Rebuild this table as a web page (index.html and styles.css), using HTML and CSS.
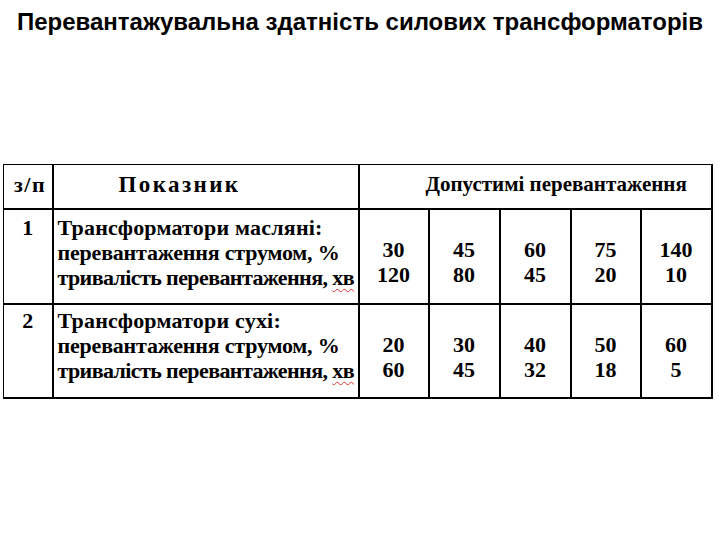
FILE: index.html
```html
<!DOCTYPE html>
<html lang="uk">
<head>
<meta charset="utf-8">
<title>Перевантажувальна здатність силових трансформаторів</title>
<link rel="stylesheet" href="styles.css">
</head>
<body>
<h1 class="title">Перевантажувальна здатність силових трансформаторів</h1>
<table class="grid">
  <colgroup>
    <col class="c-num"><col class="c-name">
    <col class="c-v1"><col class="c-v2"><col class="c-v3"><col class="c-v4"><col class="c-v5">
  </colgroup>
  <tr class="head">
    <td class="num-h">з/п</td>
    <td class="name-h">Показник</td>
    <td class="vals-h" colspan="5">Допустимі перевантаження</td>
  </tr>
  <tr class="row r1">
    <td class="num">1</td>
    <td class="name"><span class="l1">Трансформатори масляні:</span><br><span class="l2">перевантаження струмом, %</span><br><span class="l3">тривалість перевантаження, <span class="spell">хв</span></span></td>
    <td class="val">30<br>120</td>
    <td class="val">45<br>80</td>
    <td class="val">60<br>45</td>
    <td class="val">75<br>20</td>
    <td class="val">140<br>10</td>
  </tr>
  <tr class="row r2">
    <td class="num">2</td>
    <td class="name"><span class="l1">Трансформатори сухі:</span><br><span class="l2">перевантаження струмом, %</span><br><span class="l3">тривалість перевантаження, <span class="spell">хв</span></span></td>
    <td class="val">20<br>60</td>
    <td class="val">30<br>45</td>
    <td class="val">40<br>32</td>
    <td class="val">50<br>18</td>
    <td class="val">60<br>5</td>
  </tr>
</table>
</body>
</html>
```
FILE: styles.css
```css
html, body {
  margin: 0;
  padding: 0;
  background: #ffffff;
  color: #000000;
}
.title {
  margin: 0;
  padding-top: 8px;
  height: 29px;
  font-family: "Liberation Sans", Arial, sans-serif;
  font-weight: bold;
  font-size: 24px;
  line-height: 28px;
  text-align: center;
}
.grid {
  margin-top: 127px;
  margin-left: 3px;
  border-collapse: collapse;
  table-layout: fixed;
  width: 709px;
  font-family: "Liberation Serif", "Times New Roman", serif;
  font-weight: bold;
  font-size: 22px;
  line-height: 25px;
}
.c-num { width: 49px; }
.c-name { width: 306px; }
.c-v1 { width: 70px; }
.c-v2 { width: 71px; }
.c-v3 { width: 71px; }
.c-v4 { width: 70px; }
.c-v5 { width: 71px; }
.grid td {
  border: 2px solid #000;
  padding: 0;
  vertical-align: top;
}
.grid td:first-child {
  border-left-width: 1px;
}
.grid .head { height: 44px; }
.grid .r1 { height: 95px; }
.grid .r2 { height: 94px; }
.grid .head td {
  vertical-align: middle;
  border-top-width: 1px;
  padding-bottom: 4px;
  font-size: 21px;
}
.grid .head .num-h,
.grid .head .name-h {
  border-right-width: 1px;
}
.grid .head .num-h {
  padding-left: 10px;
  font-size: 22px;
  letter-spacing: 1.5px;
}
.grid .head .name-h {
  padding-left: 65px;
  font-size: 23px;
  letter-spacing: 2.4px;
}
.grid .head .vals-h {
  padding-left: 66px;
  letter-spacing: 0;
}
.grid .row .num {
  text-align: center;
  border-right-width: 1px;
}
.grid .row .name {
  padding-left: 4px;
  white-space: nowrap;
}
.grid .name .l1 { letter-spacing: 0.2px; }
.grid .name .l2 { letter-spacing: -0.2px; }
.grid .name .l3 { letter-spacing: -0.6px; }
.grid .r1 .num, .grid .r1 .name { padding-top: 5px; }
.grid .r2 .num, .grid .r2 .name { padding-top: 3px; }
.grid .val {
  text-align: center;
}
.grid .r1 .val { padding-top: 27px; }
.grid .r2 .val { padding-top: 27px; }
.spell {
  text-decoration: underline wavy #e03030;
  text-decoration-thickness: 1px;
  text-underline-offset: 3px;
}
```
